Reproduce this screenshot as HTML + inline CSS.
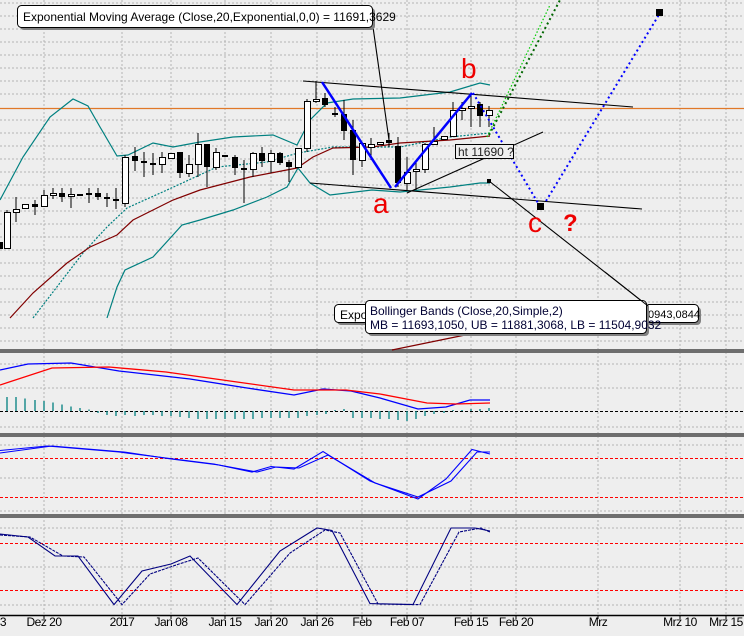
<!DOCTYPE html>
<html><head><meta charset="utf-8"><style>
html,body{margin:0;padding:0;background:#eeeeee;}
svg{display:block;font-family:"Liberation Sans",sans-serif;}
</style></head><body>
<svg width="744" height="636" viewBox="0 0 744 636" xmlns="http://www.w3.org/2000/svg">
<rect width="744" height="636" fill="#eeeeee"/>
<g stroke="#b4b4b4" stroke-width="1" stroke-dasharray="2,2" fill="none">
<path d="M44 0V615M122 0V615M171 0V615M225 0V615M271 0V615M317 0V615M362 0V615M407 0V615M471 0V615M516 0V615M598 0V615M680 0V615M726 0V615"/>
<path d="M0 3H744M0 16H744M0 29H744M0 42H744M0 55H744M0 68H744M0 81H744M0 94H744M0 120H744M0 133H744M0 146H744M0 159H744M0 172H744M0 185H744M0 198H744M0 211H744M0 224H744M0 237H744M0 250H744M0 263H744M0 276H744M0 289H744M0 302H744M0 315H744M0 328H744M0 341H744"/>
<path d="M0 364H744M0 388H744M0 427H744M0 445H744M0 478H744M0 511H744M0 528H744M0 567H744M0 605H744"/>
</g>
<rect x="0" y="349" width="744" height="4" fill="#6e6e6e"/>
<rect x="0" y="433" width="744" height="4" fill="#6e6e6e"/>
<rect x="0" y="514" width="744" height="4" fill="#6e6e6e"/>
<line x1="0" y1="615.5" x2="744" y2="615.5" stroke="#000" stroke-width="1.5"/>
<line x1="0" y1="108.5" x2="744" y2="108.5" stroke="#e07828" stroke-width="1.2"/>
<g fill="none" stroke-width="1.2">
<polyline stroke="#008080" points="0,200 23,157 50,117 73,99 88,106 100,127 117,156 128,155 153,143 173,147 200,142 233,137 273,135 297,145 310,120 327,103 353,99 400,98 450,92 480,83 490,85"/>
<polyline stroke="#008080" points="107,318 117,287 125,270 153,257 173,235 182,225 200,220 233,210 267,197 287,187 298,168 310,183 330,195 372,190 400,192 450,187 480,183 490,183"/>
<polyline stroke="#008080" stroke-dasharray="2,1.5" points="33,318 83,253 107,227 127,208 167,190 217,167 267,162 298,153 333,147 400,147 450,137 490,133"/>
<polyline stroke="#800000" points="10,318 33,293 67,263 90,247 117,235 133,220 173,200 200,190 250,177 297,168 313,157 333,148 372,147 400,143 450,140 490,136"/>
<polyline stroke="#800000" points="392,350 470,334"/>
</g>
<g stroke="#000" stroke-width="1.1" fill="none">
<line x1="303" y1="81" x2="633" y2="107"/>
<line x1="310" y1="183" x2="642" y2="209"/>
<line x1="407" y1="193" x2="543" y2="132"/>
<line x1="373" y1="27" x2="389" y2="140"/>
<line x1="489" y1="181" x2="648" y2="306"/>
</g>
<rect x="487" y="179" width="4" height="4" fill="#000"/>
<path stroke="#000" stroke-width="1" fill="none" d="M7 210V249M16 197V222M35 200V215M44 190V207M53 188V199M62 188V202M71 188V208M89 188V203M98 188V200M107 193V207M116 188V209M125 155V207M135 147V171M144 152V177M153 153V175M162 152V173M180 152V178M189 155V177M198 133V177M207 144V187M216 148V170M235 155V175M244 160V203M253 152V177M262 147V167M271 150V173M280 152V165M289 160V182M307 99V152M316 81V103M325 93V107M335 107V117M344 100V140M353 120V175M362 142V167M371 138V160M389 133V147M398 137V187M407 157V190M416 160V190M425 143V173M434 127V145M453 102V137M462 102V120M471 95V127M480 102V127M489 106V127"/>
<path fill="#000" d="M0 242h3v7h-3zM32 204h6v3h-6zM59 193h6v4h-6zM77 194h6v2h-6zM86 193h6v2h-6zM95 193h6v4h-6zM104 197h6v2h-6zM113 199h6v2h-6zM132 156h6v5h-6zM141 161h6v2h-6zM150 163h6v2h-6zM177 152h6v21h-6zM204 144h6v23h-6zM222 155h6v2h-6zM232 157h6v11h-6zM241 168h6v2h-6zM259 153h6v8h-6zM277 153h6v10h-6zM286 162h6v5h-6zM322 98h6v7h-6zM332 113h6v2h-6zM341 114h6v17h-6zM350 130h6v30h-6zM386 140h6v3h-6zM395 146h6v37h-6zM477 104h6v12h-6z"/>
<path fill="#fff" stroke="#000" stroke-width="1" d="M4.5 212.5h6v36h-6zM13.5 209.5h6v3h-6zM22.5 204.5h6v4h-6zM41.5 195.5h6v11h-6zM50.5 193.5h6v2h-6zM68.5 194.5h6v2h-6zM122.5 157.5h6v46h-6zM159.5 157.5h6v7h-6zM168.5 153.5h6v5h-6zM186.5 164.5h6v9h-6zM195.5 144.5h6v20h-6zM213.5 152.5h6v15h-6zM250.5 153.5h6v16h-6zM268.5 153.5h6v8h-6zM295.5 148.5h6v19h-6zM304.5 101.5h6v47h-6zM313.5 99.5h6v2h-6zM359.5 143.5h6v17h-6zM368.5 144.5h6v3h-6zM377.5 142.5h6v2h-6zM404.5 172.5h6v11h-6zM413.5 169.5h6v2h-6zM422.5 144.5h6v25h-6zM431.5 141.5h6v3h-6zM441.5 136.5h6v3h-6zM450.5 110.5h6v26h-6zM459.5 108.5h6v2h-6zM468.5 106.5h6v2h-6zM486.5 110.5h6v5h-6z"/>
<g fill="none">
<polyline stroke="#0000ff" stroke-width="2.5" points="322,82 391,188"/>
<polyline stroke="#0000ff" stroke-width="2.5" points="395,187 472,93"/>
<polyline stroke="#0000ff" stroke-width="2" stroke-dasharray="2,3" points="473,93 538,203"/>
<polyline stroke="#0000ff" stroke-width="2" stroke-dasharray="2,3" points="546,201 660,13"/>
<polyline stroke="#00cc00" stroke-width="1.2" stroke-dasharray="1.5,2" points="487,137 550,5"/>
<polyline stroke="#006600" stroke-width="2" stroke-dasharray="2,3" points="489,135 560,0"/>
</g>
<rect x="537" y="203" width="7" height="7" fill="#000"/>
<rect x="656" y="9" width="7" height="7" fill="#000"/>
<g fill="#ee0000" font-size="28">
<text x="373" y="213">a</text>
<text x="461" y="78">b</text>
<text x="528" y="232">c</text>
<text x="563" y="231" font-weight="bold" font-size="24">?</text>
</g>
<rect x="455.5" y="144.5" width="58" height="14" fill="#eeeeee" stroke="#000"/>
<text x="458" y="156" font-size="12" fill="#222">ht 11690 ?</text>
<rect x="20" y="8" width="355" height="22" rx="4" fill="#808080"/>
<rect x="17.5" y="5.5" width="355" height="22" rx="4" fill="#fff" stroke="#000"/>
<text x="23" y="21" font-size="12" fill="#000">Exponential Moving Average (Close,20,Exponential,0,0) = 11691,3629</text>
<rect x="337" y="307" width="364" height="18" rx="4" fill="#808080"/>
<rect x="334.5" y="304.5" width="364" height="18" rx="4" fill="#fff" stroke="#000"/>
<text x="340" y="319" font-size="12">Expo</text>
<text x="648" y="318" font-size="11">0943,0844</text>
<rect x="368" y="303" width="281" height="33" rx="4" fill="#808080"/>
<rect x="365.5" y="300.5" width="281" height="33" rx="4" fill="#fff" stroke="#000"/>
<text x="370" y="315" font-size="12" fill="#000033">Bollinger Bands (Close,20,Simple,2)</text>
<text x="370" y="329" font-size="12" fill="#000033">MB = 11693,1050, UB = 11881,3068, LB = 11504,9032</text>
<line x1="605" y1="272" x2="648" y2="306" stroke="#000"/>
<line x1="0" y1="411.5" x2="744" y2="411.5" stroke="#000" stroke-dasharray="3,2"/>
<path stroke="#008080" stroke-width="1.3" d="M7 411V397M16 411V397M25 411V398.5M35 411V400M44 411V401M53 411V402.5M62 411V404.5M71 411V406.5M80 411V408M89 411V409.5M98 411V413M107 411V415M116 411V416M125 411V415M135 411V416M144 411V415M153 411V415M162 411V416M171 411V416M180 411V417M189 411V418M198 411V419M207 411V419M216 411V419M225 411V419M235 411V419M244 411V419M253 411V419M262 411V418M271 411V418M280 411V418M289 411V418M298 411V418M307 411V416M317 411V415M326 411V414M335 411V410M344 411V409M353 411V418M362 411V418M371 411V418M380 411V419M389 411V419M398 411V420M407 411V421M416 411V419M425 411V416M434 411V414M444 411V413M453 411V410M462 411V410M471 411V409M480 411V409M489 411V408"/>
<polyline fill="none" stroke="#0000ff" stroke-width="1.3" points="0,370 28,364 71,363 119,371 190,379 247,388 294,395 323,389 351,391 380,398 418,409 446,407 470,400 490,400"/>
<polyline fill="none" stroke="#ff0000" stroke-width="1.3" points="0,385 52,368 109,367 166,372 237,382 294,390 346,390 380,394 427,403 456,404 490,403"/>
<line x1="0" y1="458.5" x2="744" y2="458.5" stroke="#ff0000" stroke-dasharray="3,2"/>
<line x1="0" y1="497.5" x2="744" y2="497.5" stroke="#ff0000" stroke-dasharray="3,2"/>
<line x1="0" y1="543.5" x2="744" y2="543.5" stroke="#ff0000" stroke-dasharray="3,2"/>
<line x1="0" y1="590.5" x2="744" y2="590.5" stroke="#ff0000" stroke-dasharray="3,2"/>
<polyline fill="none" stroke="#0000ff" stroke-width="1.1" points="0,450.5 47,446 119,452 166,458 214,464 252,472 271,466.5 294,469 323,451.5 370,481 418,499 446,479 472,449.5 490,454"/>
<polyline fill="none" stroke="#0000ff" stroke-width="1.1" points="0,453 52,446 124,452 171,459 219,465 257,472 276,467 299,468 328,455 375,483 418,497 451,481 477,452 490,452"/>
<polyline fill="none" stroke="#000080" stroke-width="1.1" points="0,534 28,537 55,556 78,556 114,604.6 142,571 171,564 190,556 237,604.6 280,551 317,528 332,530.5 370,603.6 413,604.6 451,528 475,528 490,531"/>
<polyline fill="none" stroke="#000080" stroke-width="1.1" stroke-dasharray="3,1" points="0,535 30,537 63,556 84,557 122,604.6 150,574 179,564 198,558 245,604.6 290,553 325,530 340,533 378,604 420,604.6 459,532 481,528 490,532"/>
<g font-size="12" fill="#000" text-anchor="middle" letter-spacing="-0.5">
<text x="3" y="626">3</text>
<text x="44" y="626">Dez 20</text>
<text x="122" y="626">2017</text>
<text x="171" y="626">Jan 08</text>
<text x="225" y="626">Jan 15</text>
<text x="271" y="626">Jan 20</text>
<text x="317" y="626">Jan 26</text>
<text x="362" y="626">Feb</text>
<text x="407" y="626">Feb 07</text>
<text x="471" y="626">Feb 15</text>
<text x="516" y="626">Feb 20</text>
<text x="598" y="626">Mrz</text>
<text x="680" y="626">Mrz 10</text>
<text x="726" y="626">Mrz 15</text>
</g>
<g stroke="#000"><path d="M44 615v4M122 615v4M171 615v4M225 615v4M271 615v4M317 615v4M362 615v4M407 615v4M471 615v4M516 615v4M598 615v4M680 615v4M726 615v4"/></g>
</svg>
</body></html>
